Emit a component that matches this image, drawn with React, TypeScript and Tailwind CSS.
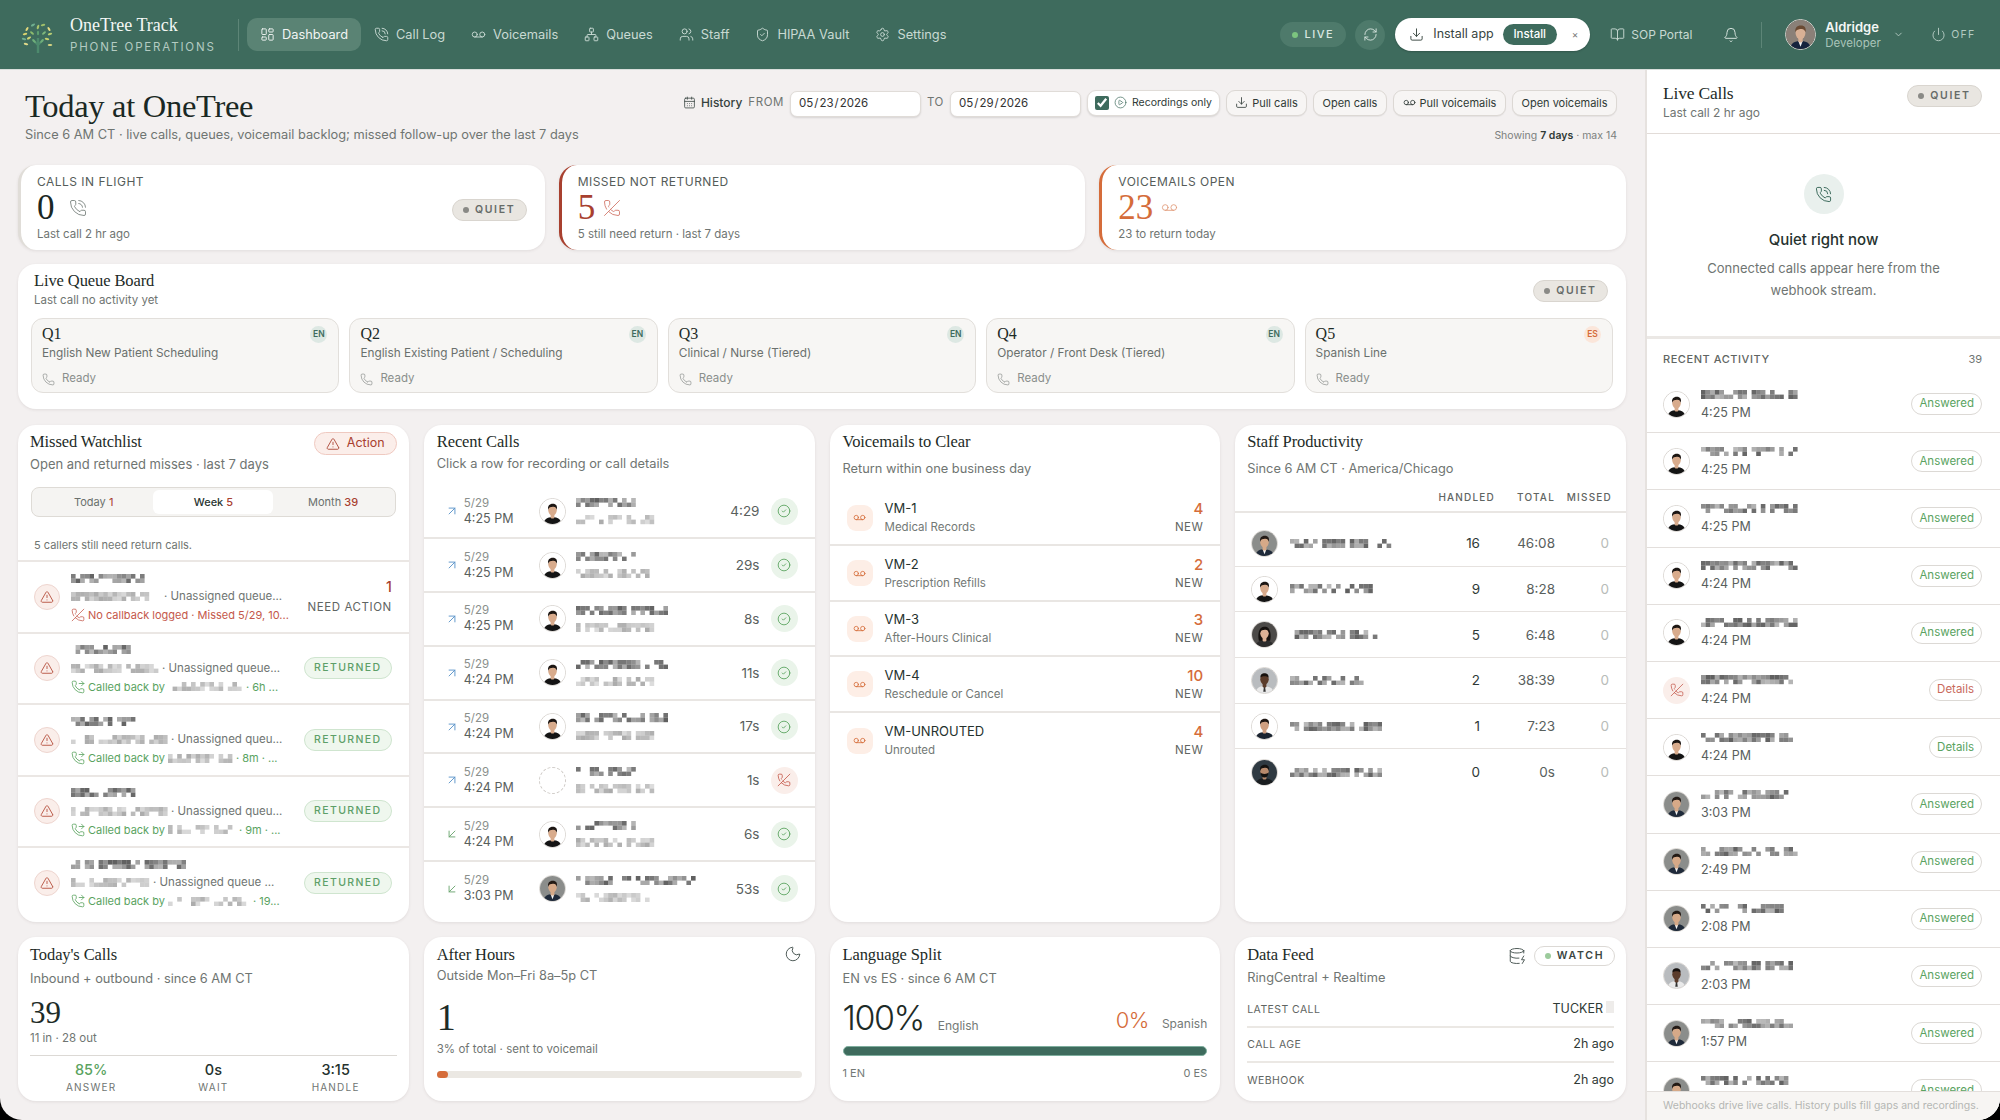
import {
  ArrowDownLeft,
  ArrowUpRight,
  Bell,
  BookOpen,
  CalendarDays,
  ChevronDown,
  CircleCheck,
  CirclePlay,
  DatabaseZap,
  Download,
  LayoutDashboard,
  Moon,
  Network,
  Phone,
  PhoneCall,
  PhoneForwarded,
  PhoneOff,
  Power,
  RefreshCw,
  Settings,
  ShieldCheck,
  TriangleAlert,
  Users,
  Voicemail,
} from "lucide-react";

type Face = "black" | "suit" | "woman" | "dark" | "smile" | "beard" | "boss";

const faces: Record<Face, { bg: string; skin: string; hair: string; shirt: string }> = {
  black: { bg: "#ffffff", skin: "#d8ab8c", hair: "#1c1613", shirt: "#141414" },
  suit: { bg: "#8b8d8b", skin: "#d6a988", hair: "#231a15", shirt: "#1f2a3a" },
  woman: { bg: "#4c4a48", skin: "#dcb196", hair: "#15110f", shirt: "#2b2b2b" },
  dark: { bg: "#b9bcbf", skin: "#5b3c2b", hair: "#17110e", shirt: "#e9e9e9" },
  smile: { bg: "#ffffff", skin: "#cf9f80", hair: "#1e1612", shirt: "#1b2430" },
  beard: { bg: "#2f3a42", skin: "#b88a6c", hair: "#141210", shirt: "#1a1d20" },
  boss: { bg: "#8a8078", skin: "#d8b095", hair: "#6a4a33", shirt: "#16233d" },
};

function Avatar({ face, size = 27 }: { face: Face; size?: number }) {
  const f = faces[face];
  return (
    <svg
      width={size}
      height={size}
      viewBox="0 0 40 40"
      className="shrink-0 rounded-full border border-[#d8d4d0]"
    >
      <rect width="40" height="40" fill={f.bg} />
      <path d="M6 40c0-8 6-11 14-11s14 3 14 11z" fill={f.shirt} />
      {face === "suit" || face === "boss" ? (
        <path d="M17 29h6l-3 8z" fill="#f2f2f2" />
      ) : null}
      {face === "dark" ? <path d="M19 30h2l1 8h-4z" fill="#333" /> : null}
      {face === "woman" ? (
        <path d="M11 30c-2-9-1-22 9-22s11 13 9 22z" fill={f.hair} />
      ) : null}
      <rect x="17" y="23" width="6" height="8" rx="2" fill={f.skin} />
      <ellipse cx="20" cy="18" rx="6.8" ry="8.6" fill={f.skin} />
      <path
        d={
          face === "dark"
            ? "M13.5 15c0-5 3-6.5 6.5-6.5s6.500 1.500 6.500 6.500c-3-2.500-10-2.500-13 0z"
            : "M13 17c-1-6 2-9.500 7.500-9.500S28 11 27 17c-1-3-3-5-6.500-4.500-3 .5-6 .5-7.500 4.500z"
        }
        fill={f.hair}
      />
      {face === "beard" ? (
        <path d="M13.500 20c1 7 4 8 6.500 8s5.500-1 6.500-8c-2 3-11 3-13 0z" fill={f.hair} />
      ) : null}
    </svg>
  );
}

// redacted text in the picture: a seeded mosaic, not letters
function Mosaic({
  seed,
  width,
  dark = false,
  rows = 2,
}: {
  seed: number;
  width: number;
  dark?: boolean;
  rows?: number;
}) {
  const cell = 4.6;
  const cells = [];
  let s = seed * 7919 + 13;
  const cols = Math.floor(width / cell);
  for (let y = 0; y < rows; y++) {
    for (let x = 0; x < cols; x++) {
      s = (s * 1103515245 + 12345) & 0x7fffffff;
      const v = ((s >> 8) % 100) / 100;
      if (v < 0.3) continue;
      const o = (dark ? 0.15 : 0.06) + v * (dark ? 0.6 : 0.34);
      cells.push(
        <rect key={`${x}-${y}`} x={x * cell} y={y * cell} width={cell} height={cell} fill="#2a2a2a" opacity={o} />,
      );
    }
  }
  return (
    <svg width={width} height={rows * cell} className="block shrink-0 blur-[0.7px]">
      {cells}
    </svg>
  );
}

function Logo() {
  const leaves: [number, number, number, string][] = [
    [17, 6, -70, "#a9c46c"],
    [12, 4, -30, "#6fae8f"],
    [22, 4, -15, "#9fbf6a"],
    [6, 8, -60, "#e1d77c"],
    [28, 8, 60, "#e6dc86"],
    [4, 13, -15, "#d9d26e"],
    [11, 12, 40, "#8dbb6c"],
    [23, 12, -40, "#7fb87c"],
    [29, 13, -20, "#b6cc74"],
    [3, 18, 15, "#6fae8f"],
    [8, 17, -30, "#cfd474"],
    [17, 12, 90, "#5fa070"],
    [26, 18, 10, "#c6d070"],
    [5, 23, 15, "#e0d98a"],
    [13, 20, 45, "#6fae7a"],
    [21, 20, -45, "#6fae7a"],
    [29, 24, 0, "#dcd884"],
  ];
  return (
    <svg width="36" height="32" viewBox="0 0 34 32" className="shrink-0">
      <path d="M17 32V17M17 24l-5-5M17 24l5-5" stroke="#4d8a6d" strokeWidth="2.4" fill="none" />
      {leaves.map(([x, y, r, c]) => (
        <ellipse
          key={`${x}-${y}`}
          cx={x}
          cy={y}
          rx="2.300"
          ry="1.100"
          fill={c}
          transform={`rotate(${r} ${x} ${y})`}
        />
      ))}
    </svg>
  );
}

const serif = "font-['Liberation_Serif',serif]";

function Title({ children }: { children: React.ReactNode }) {
  return (
    <div className={`${serif} h-[20px] text-[16.5px] leading-[20px] tracking-[-0.1px] text-[#1d2b27]`}>
      {children}
    </div>
  );
}

function Sub({ children, className = "" }: { children: React.ReactNode; className?: string }) {
  return <div className={`h-[18px] text-[12.8px] leading-[18px] text-[#6f7572] ${className}`}>{children}</div>;
}

function Quiet({ className = "" }: { className?: string }) {
  return (
    <div
      className={`flex h-[22px] w-[75px] shrink-0 items-center justify-center gap-[6px] rounded-full border border-[#d9d5cf] bg-[#e9e6e1] text-[10.5px] font-semibold tracking-[0.16em] text-[#666b68] ${className}`}
    >
      <span className="h-[6px] w-[6px] rounded-full bg-[#8a8a86]" />
      QUIET
    </div>
  );
}

const navItems = [
  { label: "Dashboard", icon: LayoutDashboard, active: true },
  { label: "Call Log", icon: PhoneCall },
  { label: "Voicemails", icon: Voicemail },
  { label: "Queues", icon: Network },
  { label: "Staff", icon: Users },
  { label: "HIPAA Vault", icon: ShieldCheck },
  { label: "Settings", icon: Settings },
];

function Header() {
  return (
    <header className="flex h-[70px] shrink-0 items-center border-b border-[#d9dedb] bg-[#3e6b5d] pl-[20px] text-white">
      <div className="w-[46px] pt-[4px]">
        <Logo />
      </div>
      <div className="ml-[4px] w-[168px]">
        <div className={`${serif} text-[18px] leading-[22px] text-[#f4f7f5]`}>OneTree Track</div>
        <div className="mt-[3px] text-[11.500px] leading-[16px] tracking-[0.16em] text-[#b4cbc2]">PHONE OPERATIONS</div>
      </div>
      <div className="h-[32px] w-px bg-[#5d8577]" />
      <nav className="ml-[8px] flex items-center">
        {navItems.map((item) => (
          <div
            key={item.label}
            className={`flex h-[33px] items-center gap-[7px] rounded-[10px] px-[13px] text-[12.8px] ${
              item.active ? "bg-[#5a8374] text-[#f1f5f3]" : "text-[#c9dad3]"
            }`}
          >
            <item.icon size={15} strokeWidth={1.500} />
            {item.label}
          </div>
        ))}
      </nav>
      <div className="ml-auto flex items-center pr-[24.500px]">
        <div className="flex h-[25px] w-[66px] items-center justify-center gap-[6px] rounded-full bg-[#4e7a6b] text-[11px] font-medium tracking-[0.14em] text-[#dbe8e2]">
          <span className="h-[6px] w-[6px] rounded-full bg-[#7cc47f]" />
          LIVE
        </div>
        <div className="ml-[9px] flex h-[30px] w-[30px] items-center justify-center rounded-full bg-[#4e7a6b] text-[#d6e4de]">
          <RefreshCw size={15} strokeWidth={1.500} />
        </div>
        <div className="ml-[10px] flex h-[33px] w-[195px] items-center rounded-full bg-white pl-[14px] text-[#38453f] shadow-[0_1px_2px_rgba(0,0,0,.2)]">
          <Download size={15} strokeWidth={1.500} />
          <span className="ml-[9px] whitespace-nowrap text-[12.500px]">Install app</span>
          <span className="ml-[9px] flex h-[21px] w-[54px] items-center justify-center rounded-full bg-[#3e6b5d] text-[11.500px] font-medium text-white">
            Install
          </span>
          <span className="ml-[15px] text-[10px] text-[#777]">×</span>
        </div>
        <div className="ml-[20px] flex w-[82px] items-center gap-[6px] whitespace-nowrap text-[12px] text-[#c9dad3]">
          <BookOpen size={15} strokeWidth={1.500} className="shrink-0" />
          SOP Portal
        </div>
        <Bell size={16} strokeWidth={1.500} className="ml-[31px] text-[#d3e1db]" />
        <div className="ml-[22px] h-[26px] w-px bg-[#5d8577]" />
        <div className="ml-[23px]">
          <Avatar face="boss" size={31} />
        </div>
        <div className="ml-[9px] w-[62px]">
          <div className="text-[13px] font-semibold leading-[18px] text-[#f4f7f5]">Aldridge</div>
          <div className="text-[11.500px] leading-[15px] text-[#a9c4b9]">Developer</div>
        </div>
        <ChevronDown size={11} className="ml-[6px] text-[#b4cbc2]" />
        <Power size={15} strokeWidth={1.500} className="ml-[27px] text-[#b4cbc2]" />
        <span className="ml-[5px] text-[10.500px] tracking-[0.12em] text-[#b4cbc2]">OFF</span>
      </div>
    </header>
  );
}

function Chip({ children, className }: { children: React.ReactNode; className: string }) {
  return (
    <div
      className={`flex h-[26px] items-center justify-center gap-[4px] whitespace-nowrap rounded-[9px] border border-[#dcd8d4] bg-[#f7f5f4] text-[11px] text-[#2f3a36] shadow-[0_1px_1px_rgba(0,0,0,.06)] ${className}`}
    >
      {children}
    </div>
  );
}

function DateBox({ value }: { value: string }) {
  return (
    <input
      type="date"
      readOnly
      value={value}
      className="h-[26px] w-[131px] rounded-[7px] border border-[#e0dcd8] bg-white px-[7px] text-[11.500px] text-[#333] shadow-[0_1px_2px_rgba(0,0,0,.12)]"
    />
  );
}

function PageHead() {
  return (
    <div className="flex h-[95px] shrink-0 justify-between pl-[25px] pr-[28px]">
      <div className="pt-[16px]">
        <h1 className={`${serif} text-[32.500px] leading-[40px] tracking-[-0.3px] text-[#1a2824]`}>Today at OneTree</h1>
        <div className="text-[12.8px] leading-[18px] text-[#6f7572]">
          Since 6 AM CT · live calls, queues, voicemail backlog; missed follow-up over the last 7 days
        </div>
      </div>
      <div className="flex flex-col items-end pt-[19px]">
        <div className="flex items-center">
          <CalendarDays size={13} strokeWidth={1.500} className="text-[#3e4a46]" />
          <span className="ml-[5px] text-[12px] font-medium text-[#36423e]">History</span>
          <span className="ml-[6px] text-[11.500px] tracking-[0.05em] text-[#6f7572]">FROM</span>
          <span className="ml-[6px]">
            <DateBox value="2026-05-23" />
          </span>
          <span className="ml-[6px] text-[11.500px] tracking-[0.05em] text-[#6f7572]">TO</span>
          <span className="ml-[6px]">
            <DateBox value="2026-05-29" />
          </span>
          <div className="ml-[6px] flex h-[26px] w-[133px] items-center gap-[5px] whitespace-nowrap rounded-[9px] border border-[#e0dcd8] bg-white px-[7px] text-[10.500px] text-[#2f3a36] shadow-[0_1px_2px_rgba(0,0,0,.12)]">
            <input type="checkbox" readOnly checked className="h-[14px] w-[14px] accent-[#3e6b5d]" />
            <CirclePlay size={13} strokeWidth={1.300} className="shrink-0 text-[#3e6b5d]" />
            Recordings only
          </div>
          <div className="ml-[6px] flex gap-[6px]">
            <Chip className="w-[81px]">
              <Download size={13} strokeWidth={1.500} />
              Pull calls
            </Chip>
            <Chip className="w-[74px]">Open calls</Chip>
            <Chip className="w-[113px]">
              <Voicemail size={13} strokeWidth={1.500} />
              Pull voicemails
            </Chip>
            <Chip className="w-[105px]">Open voicemails</Chip>
          </div>
        </div>
        <div className="mt-[12px] text-[10.500px] leading-[14px] text-[#7b807d]">
          Showing <b className="font-semibold text-[#2f3a36]">7 days</b> · max 14
        </div>
      </div>
    </div>
  );
}

const cardClass = "rounded-[18px] bg-white shadow-[0_1px_3px_rgba(70,50,50,.10)]";

function Kpi({
  label,
  value,
  icon,
  sub,
  border,
  color,
  quiet,
}: {
  label: string;
  value: string;
  icon: React.ReactNode;
  sub: string;
  border: string;
  color: string;
  quiet?: boolean;
}) {
  return (
    <div className={`${cardClass} ${border} flex h-[85px] items-center justify-between border-l-[3px] pl-[16px] pr-[18px]`}>
      <div>
        <div className="h-[16px] text-[12px] leading-[16px] tracking-[0.04em] text-[#555c59]">{label}</div>
        <div className="flex h-[36px] items-center gap-[8px]">
          <span className={`${serif} ${color} text-[35px] leading-[36px]`}>{value}</span>
          {icon}
        </div>
        <div className="h-[16px] text-[11.500px] leading-[16px] text-[#6f7572]">{sub}</div>
      </div>
      {quiet ? <Quiet className="mt-[4px]" /> : null}
    </div>
  );
}

const queues = [
  { q: "Q1", name: "English New Patient Scheduling", lang: "EN" },
  { q: "Q2", name: "English Existing Patient / Scheduling", lang: "EN" },
  { q: "Q3", name: "Clinical / Nurse (Tiered)", lang: "EN" },
  { q: "Q4", name: "Operator / Front Desk (Tiered)", lang: "EN" },
  { q: "Q5", name: "Spanish Line", lang: "ES" },
];

function QueueBoard() {
  return (
    <section className={`${cardClass} mt-[14px] h-[145px]`}>
      <div className="flex justify-between pl-[16px] pr-[18px] pt-[7px]">
        <div>
          <Title>Live Queue Board</Title>
          <div className="mt-px h-[16px] text-[11.500px] leading-[16px] text-[#6f7572]">Last call no activity yet</div>
        </div>
        <Quiet className="mt-[9px]" />
      </div>
      <div className="mt-[10px] grid grid-cols-5 gap-[10px] px-[13px]">
        {queues.map((q) => (
          <div key={q.q} className="h-[75px] rounded-[12px] border border-[#e2dfdb] bg-[#f7f6f4] pl-[10px] pr-[11px] pt-[5px]">
            <div className="flex h-[20px] items-start justify-between">
              <span className={`${serif} text-[16px] leading-[20px] text-[#1d2b27]`}>{q.q}</span>
              <span
                className={`mt-[2px] flex h-[17px] w-[17px] items-center justify-center rounded-full text-[8.500px] font-semibold ${
                  q.lang === "EN" ? "bg-[#dde8e3] text-[#3e6b5d]" : "bg-[#fbe6da] text-[#d56c3a]"
                }`}
              >
                {q.lang}
              </span>
            </div>
            <div className="mt-px h-[16px] text-[11.800px] leading-[16px] text-[#6a706d]">{q.name}</div>
            <div className="mt-[10px] flex h-[16px] items-center gap-[7px] text-[11.500px] text-[#8a8f8c]">
              <Phone size={13} strokeWidth={1.300} />
              Ready
            </div>
          </div>
        ))}
      </div>
    </section>
  );
}

const missed = [
  { name: 77, phone: 90, text: "Unassigned queue...", back: 0, tail: "", action: true },
  { name: 62, phone: 88, text: "Unassigned queue...", back: 75, tail: "· 6h ...", action: false },
  { name: 66, phone: 97, text: "Unassigned queu...", back: 65, tail: "· 8m · ...", action: false },
  { name: 66, phone: 97, text: "Unassigned queu...", back: 68, tail: "· 9m · ...", action: false },
  { name: 118, phone: 79, text: "Unassigned queue ...", back: 82, tail: "· 19...", action: false },
];

function Watchlist() {
  return (
    <section className={`${cardClass} overflow-hidden`}>
      <div className="flex items-start justify-between pl-[12px] pr-[12px] pt-[7px]">
        <div>
          <Title>Missed Watchlist</Title>
          <Sub className="mt-[3px] text-[13px]">Open and returned misses · last 7 days</Sub>
        </div>
        <div className="flex h-[23px] w-[83px] items-center justify-center gap-[7px] rounded-full border border-[#efc9c0] bg-[#fbeeea] text-[12.500px] text-[#a8402f]">
          <TriangleAlert size={14} strokeWidth={1.500} />
          Action
        </div>
      </div>
      <div className="mx-[13px] mt-[14px] flex h-[30px] items-center rounded-[8px] border border-[#dedbd6] bg-[#f5f4f2] px-[2px] text-[11px]">
        <div className="flex-1 text-center text-[#6a706d]">
          Today <span className="text-[#a8402f]">1</span>
        </div>
        <div className="flex h-[24px] w-[120px] items-center justify-center rounded-[6px] bg-white font-medium text-[#2b3733]">
          Week&nbsp;<span className="text-[#a8402f]">5</span>
        </div>
        <div className="flex-1 text-center text-[#6a706d]">
          Month <span className="font-medium text-[#a8402f]">39</span>
        </div>
      </div>
      <div className="flex h-[43px] items-end pb-[7px] pl-[16px] text-[11px] leading-[16px] text-[#6f7572]">
        5 callers still need return calls.
      </div>
      {missed.map((m, i) => (
        <div key={i} className="flex h-[71.500px] items-center border-t-[2px] border-[#ebe7e4] pl-[16px] pr-[17px]">
          <div className="flex h-[26px] w-[26px] shrink-0 items-center justify-center rounded-full border border-[#eed5cf] bg-[#faeeea] text-[#b44a38]">
            <TriangleAlert size={14} strokeWidth={1.500} />
          </div>
          <div className="ml-[11px] min-w-0 flex-1">
            <div className="flex h-[18px] items-center">
              <Mosaic seed={i + 3} width={m.name} dark />
            </div>
            <div className="flex h-[19px] items-center gap-[3px] whitespace-nowrap text-[11.500px] text-[#6f7572]">
              <Mosaic seed={i + 31} width={m.phone} />· {m.text}
            </div>
            {m.action ? (
              <div className="flex h-[18px] items-center gap-[3px] whitespace-nowrap text-[11px] text-[#c4574a]">
                <PhoneOff size={14} strokeWidth={1.300} />
                No callback logged · Missed 5/29, 10...
              </div>
            ) : (
              <div className="flex h-[18px] items-center gap-[3px] whitespace-nowrap text-[11px] text-[#5aa35f]">
                <PhoneForwarded size={14} strokeWidth={1.400} />
                Called back by <Mosaic seed={i + 51} width={m.back} /> {m.tail}
              </div>
            )}
          </div>
          {m.action ? (
            <div className="text-right">
              <div className="text-[14px] font-medium leading-[20px] text-[#a8402f]">1</div>
              <div className="mt-[2px] text-[11.500px] tracking-[0.05em] text-[#5f6562]">NEED ACTION</div>
            </div>
          ) : (
            <div className="flex h-[22px] w-[88px] shrink-0 items-center justify-center rounded-full border border-[#cfe5cf] bg-[#eff7ee] text-[10.500px] font-medium tracking-[0.13em] text-[#5d9f68]">
              RETURNED
            </div>
          )}
        </div>
      ))}
    </section>
  );
}

const calls: { up: boolean; time: string; dur: string; face: Face | null; m: number; p: number }[] = [
  { up: true, time: "4:25 PM", dur: "4:29", face: "black", m: 64, p: 80 },
  { up: true, time: "4:25 PM", dur: "29s", face: "black", m: 64, p: 80 },
  { up: true, time: "4:25 PM", dur: "8s", face: "black", m: 96, p: 82 },
  { up: true, time: "4:24 PM", dur: "11s", face: "black", m: 96, p: 82 },
  { up: true, time: "4:24 PM", dur: "17s", face: "black", m: 96, p: 82 },
  { up: true, time: "4:24 PM", dur: "1s", face: null, m: 64, p: 80 },
  { up: false, time: "4:24 PM", dur: "6s", face: "black", m: 64, p: 80 },
  { up: false, time: "3:03 PM", dur: "53s", face: "suit", m: 120, p: 74 },
];

function RecentCalls() {
  return (
    <section className={`${cardClass} overflow-hidden`}>
      <div className="pl-[13px] pt-[7px]">
        <Title>Recent Calls</Title>
        <Sub className="mt-[3px]">Click a row for recording or call details</Sub>
      </div>
      <div className="mt-[12.500px]">
        {calls.map((c, i) => (
          <div
            key={i}
            className={`flex h-[53.800px] items-center pl-[21px] pr-[17px] ${
              i < calls.length - 1 ? "border-b-[2px] border-[#e9e6e3]" : ""
            }`}
          >
            {c.up ? (
              <ArrowUpRight size={14} strokeWidth={1.600} className="shrink-0 text-[#5a93c9]" />
            ) : (
              <ArrowDownLeft size={14} strokeWidth={1.600} className="shrink-0 text-[#6aa56f]" />
            )}
            <div className="ml-[5px] w-[75px]">
              <div className="text-[11.500px] leading-[15px] text-[#8a8f8c]">5/29</div>
              <div className="text-[12.500px] leading-[16px] text-[#59605d]">{c.time}</div>
            </div>
            {c.face ? (
              <Avatar face={c.face} />
            ) : (
              <div className="h-[27px] w-[27px] shrink-0 rounded-full border border-dashed border-[#cfcbc7]" />
            )}
            <div className="ml-[10px] flex-1">
              <Mosaic seed={i + 11} width={c.m} dark />
              <div className="mt-[8px]">
                <Mosaic seed={i + 71} width={c.p} />
              </div>
            </div>
            <span className="text-[13.500px] text-[#59605d]">{c.dur}</span>
            <span
              className={`ml-[11px] flex h-[27px] w-[27px] shrink-0 items-center justify-center rounded-full ${
                c.face ? "bg-[#eaf4ea] text-[#5aa35f]" : "bg-[#faeeea] text-[#c4574a]"
              }`}
            >
              {c.face ? <CircleCheck size={14} strokeWidth={1.500} /> : <PhoneOff size={14} strokeWidth={1.400} />}
            </span>
          </div>
        ))}
      </div>
    </section>
  );
}

const voicemails = [
  { id: "VM-1", name: "Medical Records", count: 4 },
  { id: "VM-2", name: "Prescription Refills", count: 2 },
  { id: "VM-3", name: "After-Hours Clinical", count: 3 },
  { id: "VM-4", name: "Reschedule or Cancel", count: 10 },
  { id: "VM-UNROUTED", name: "Unrouted", count: 4 },
];

function VoicemailsCard() {
  return (
    <section className={`${cardClass} overflow-hidden`}>
      <div className="pl-[13px] pt-[7px]">
        <Title>Voicemails to Clear</Title>
        <Sub className="mt-[8px]">Return within one business day</Sub>
      </div>
      <div className="mt-[12.500px]">
        {voicemails.map((v, i) => (
          <div
            key={v.id}
            className={`flex h-[55.500px] items-center pl-[17px] pr-[17px] pt-px ${
              i < voicemails.length - 1 ? "border-b-[2px] border-[#e9e6e3]" : ""
            }`}
          >
            <div className="flex h-[26px] w-[26px] items-center justify-center rounded-[9px] bg-[#fdeee6] text-[#d56c3a]">
              <Voicemail size={13} strokeWidth={1.500} />
            </div>
            <div className="ml-[12px] flex-1">
              <div className="text-[13px] leading-[19px] text-[#25322e]">{v.id}</div>
              <div className="text-[11.500px] leading-[18px] text-[#737976]">{v.name}</div>
            </div>
            <div className="text-right">
              <div className="text-[15px] font-medium leading-[19px] text-[#d56c3a]">{v.count}</div>
              <div className="text-[11.500px] leading-[18px] tracking-[0.04em] text-[#5f6562]">NEW</div>
            </div>
          </div>
        ))}
      </div>
    </section>
  );
}

const staff: { face: Face; w: number; handled: number; total: string }[] = [
  { face: "suit", w: 105, handled: 16, total: "46:08" },
  { face: "black", w: 88, handled: 9, total: "8:28" },
  { face: "woman", w: 88, handled: 5, total: "6:48" },
  { face: "dark", w: 78, handled: 2, total: "38:39" },
  { face: "smile", w: 93, handled: 1, total: "7:23" },
  { face: "beard", w: 93, handled: 0, total: "0s" },
];

function StaffCard() {
  return (
    <section className={`${cardClass} overflow-hidden`}>
      <div className="pl-[12px] pt-[7px]">
        <Title>Staff Productivity</Title>
        <Sub className="mt-[8px]">Since 6 AM CT · America/Chicago</Sub>
      </div>
      <div className="flex h-[35px] items-center justify-end border-b-[2px] border-[#e9e6e3] pr-[14px] pt-[5px] text-[10px] font-medium tracking-[0.12em] text-[#5f6562]">
        <span>HANDLED</span>
        <span className="w-[60px] text-right">TOTAL</span>
        <span className="w-[57px] text-right">MISSED</span>
      </div>
      <div className="mt-[8px]">
        {staff.map((s, i) => (
          <div
            key={s.face}
            className={`flex h-[45.700px] items-center pl-[16px] pr-[17px] ${
              i < staff.length - 1 ? "border-b border-[#e6e2df]" : ""
            }`}
          >
            <Avatar face={s.face} />
            <div className="ml-[12px] flex-1">
              <Mosaic seed={i + 91} width={s.w} dark />
            </div>
            <span className="text-[13.500px] text-[#2f3a36]">{s.handled}</span>
            <span className="w-[75px] text-right text-[13.500px] text-[#59605d]">{s.total}</span>
            <span className="w-[54px] text-right text-[13.500px] text-[#b8bcb9]">0</span>
          </div>
        ))}
      </div>
    </section>
  );
}

function BottomRow() {
  return (
    <div className="mt-[15px] grid h-[164px] grid-cols-4 gap-[15px]">
      <section className={`${cardClass} px-[12px] pt-[8px]`}>
        <Title>Today's Calls</Title>
        <Sub className="mt-[5px]">Inbound + outbound · since 6 AM CT</Sub>
        <div className={`${serif} mt-[8px] h-[34px] text-[31px] leading-[34px] text-[#1d2b27]`}>39</div>
        <div className="h-[16px] text-[11.500px] leading-[16px] text-[#6f7572]">11 in · 28 out</div>
        <div className="mt-[9px] grid grid-cols-3 border-t border-[#dcd9d5] pt-[4px] text-center">
          {[
            { v: "85%", l: "ANSWER", c: "text-[#5aa35f]" },
            { v: "0s", l: "WAIT", c: "text-[#25322e]" },
            { v: "3:15", l: "HANDLE", c: "text-[#25322e]" },
          ].map((s) => (
            <div key={s.l}>
              <div className={`text-[14.500px] font-medium leading-[20px] ${s.c}`}>{s.v}</div>
              <div className="text-[10px] leading-[14px] tracking-[0.12em] text-[#6f7572]">{s.l}</div>
            </div>
          ))}
        </div>
      </section>
      <section className={`${cardClass} px-[13px] pt-[8px]`}>
        <div className="flex justify-between">
          <Title>After Hours</Title>
          <Moon size={18} strokeWidth={1.300} className="text-[#4c5855]" />
        </div>
        <Sub className="mt-[2px]">Outside Mon–Fri 8a–5p CT</Sub>
        <div className={`${serif} mt-[15px] h-[34px] text-[38px] leading-[34px] text-[#1d2b27]`}>1</div>
        <div className="mt-[7px] h-[16px] text-[11.500px] leading-[16px] text-[#6f7572]">3% of total · sent to voicemail</div>
        <div className="mt-[14px] h-[7px] rounded-full bg-[#ebe8e3]">
          <div className="h-full w-[3%] rounded-full bg-[#d56c3a]" />
        </div>
      </section>
      <section className={`${cardClass} px-[13px] pt-[8px]`}>
        <Title>Language Split</Title>
        <Sub className="mt-[5px]">EN vs ES · since 6 AM CT</Sub>
        <div className="mt-[9px] flex h-[40px] items-end justify-between pb-[2.500px]">
          <div className="flex items-baseline gap-[14px]">
            <span className="text-[34px] font-light leading-[34px] tracking-[-1.500px] text-[#1d2b27]">100%</span>
            <span className="text-[12px] text-[#737976]">English</span>
          </div>
          <div className="mb-[-2.500px] flex items-baseline gap-[13px]">
            <span className="text-[22px] font-light leading-[34px] tracking-[-0.5px] text-[#d56c3a]">0%</span>
            <span className="text-[12px] text-[#737976]">Spanish</span>
          </div>
        </div>
        <div className="mt-[9px] h-[10px] rounded-full border border-[#7fae9e] bg-[#3e6b5d]" />
        <div className="mt-[9px] flex justify-between text-[11px] leading-[16px] text-[#737976]">
          <span>1 EN</span>
          <span>0 ES</span>
        </div>
      </section>
      <section className={`${cardClass} px-[12px] pt-[8px]`}>
        <div className="flex items-start justify-between">
          <Title>Data Feed</Title>
          <div className="-mr-px flex items-center gap-[8px] pt-px">
            <DatabaseZap size={18} strokeWidth={1.300} className="text-[#4c5855]" />
            <div className="flex h-[20px] w-[81px] items-center justify-center gap-[6px] rounded-full border border-[#dcd9d5] text-[10.500px] font-semibold tracking-[0.16em] text-[#3a4541]">
              <span className="h-[6px] w-[6px] rounded-full bg-[#9ccb9c]" />
              WATCH
            </div>
          </div>
        </div>
        <Sub className="mt-[3px]">RingCentral + Realtime</Sub>
        <div className="mt-[6px]">
          {[
            { k: "LATEST CALL", v: "TUCKER" },
            { k: "CALL AGE", v: "2h ago" },
            { k: "WEBHOOK", v: "2h ago" },
          ].map((r, i) => (
            <div
              key={r.k}
              className={`flex h-[35px] items-center justify-between ${i < 2 ? "border-b-[2px] border-[#ebe8e4]" : ""}`}
            >
              <span className="text-[10.500px] tracking-[0.04em] text-[#5f6562]">{r.k}</span>
              <span className="flex items-center gap-[3px] text-[12.500px] text-[#2f3a36]">
                {r.v}
                {i === 0 ? <span className="mb-[6px] h-[12px] w-[8px] bg-[#eeecea]" /> : null}
              </span>
            </div>
          ))}
        </div>
      </section>
    </div>
  );
}

const activity: { face: Face | null; time: string; status: string; seed: number; w: number }[] = [
  { face: "black", time: "4:25 PM", status: "Answered", seed: 1, w: 97 },
  { face: "black", time: "4:25 PM", status: "Answered", seed: 2, w: 97 },
  { face: "black", time: "4:25 PM", status: "Answered", seed: 3, w: 97 },
  { face: "black", time: "4:24 PM", status: "Answered", seed: 4, w: 97 },
  { face: "black", time: "4:24 PM", status: "Answered", seed: 5, w: 97 },
  { face: null, time: "4:24 PM", status: "Details", seed: 6, w: 97 },
  { face: "black", time: "4:24 PM", status: "Details", seed: 7, w: 97 },
  { face: "suit", time: "3:03 PM", status: "Answered", seed: 8, w: 90 },
  { face: "suit", time: "2:49 PM", status: "Answered", seed: 9, w: 97 },
  { face: "suit", time: "2:08 PM", status: "Answered", seed: 10, w: 90 },
  { face: "dark", time: "2:03 PM", status: "Answered", seed: 11, w: 93 },
  { face: "suit", time: "1:57 PM", status: "Answered", seed: 12, w: 93 },
  { face: "suit", time: "", status: "Answered", seed: 13, w: 90 },
];

function Sidebar() {
  return (
    <aside className="flex w-[355px] shrink-0 flex-col overflow-hidden border-l-[2px] border-[#e6e2df] bg-white">
      <div className="flex h-[64px] shrink-0 justify-between border-b border-[#e2dcd8] pl-[16px] pr-[18px] pt-[13px]">
        <div>
          <div className={`${serif} text-[17.500px] leading-[20px] tracking-[-0.2px] text-[#1d2b27]`}>Live Calls</div>
          <div className="mt-px text-[12px] leading-[17px] text-[#6f7572]">Last call 2 hr ago</div>
        </div>
        <Quiet className="mt-[2px]" />
      </div>
      <div className="flex h-[205px] shrink-0 flex-col items-center border-b-[3px] border-[#ebe8e5] pt-[40px]">
        <div className="flex h-[40px] w-[40px] items-center justify-center rounded-full bg-[#e9f0ed] text-[#3e6b5d]">
          <PhoneCall size={17} strokeWidth={1.400} />
        </div>
        <div className="mt-[15px] text-[15px] font-medium leading-[22px] text-[#25322e]">Quiet right now</div>
        <div className="mt-[6px] w-[260px] text-center text-[13px] leading-[22px] text-[#6f7572]">
          Connected calls appear here from the webhook stream.
        </div>
      </div>
      <div className="flex h-[37px] shrink-0 items-center justify-between pl-[16px] pr-[18px] pt-[3px] text-[11px]">
        <span className="font-medium tracking-[0.05em] text-[#5f6562]">RECENT ACTIVITY</span>
        <span className="text-[#6f7572]">39</span>
      </div>
      <div className="min-h-0 flex-1 overflow-hidden">
        {activity.map((a) => (
          <div key={a.seed} className="flex h-[57.200px] items-center border-b border-[#e3dfdc] pl-[16px] pr-[18px]">
            {a.face ? (
              <Avatar face={a.face} />
            ) : (
              <div className="flex h-[27px] w-[27px] shrink-0 items-center justify-center rounded-full bg-[#faeeea] text-[#c4574a]">
                <PhoneOff size={14} strokeWidth={1.300} />
              </div>
            )}
            <div className="ml-[11px] flex-1 pt-[2px]">
              <Mosaic seed={a.seed + 200} width={a.w} dark />
              {a.time ? (
                <div className="mt-[6px] text-[12.500px] leading-[16px] text-[#59605d]">{a.time}</div>
              ) : (
                <div className="mt-[6px] h-[16px]" />
              )}
            </div>
            <div
              className={`flex h-[22px] items-center rounded-full border border-[#dcd9d5] px-[7px] text-[11.500px] ${
                a.status === "Answered"
                  ? "text-[#5aa35f]"
                  : a.face
                    ? "text-[#5aa35f]"
                    : "text-[#c96a5c]"
              }`}
            >
              {a.status}
            </div>
          </div>
        ))}
      </div>
      <div className="flex h-[29px] shrink-0 items-center border-t border-[#e3dfdc] bg-[#f7f5f3] pl-[16px] text-[10.500px] text-[#b5b7b3]">
        Webhooks drive live calls. History pulls fill gaps and recordings.
      </div>
    </aside>
  );
}

export default function App() {
  return (
    <div className="h-[1120px] w-[2000px] overflow-hidden bg-black font-['Inter',sans-serif]">
      <div className="flex h-full flex-col overflow-hidden rounded-b-[22px] bg-[#f3f0f0]">
        <Header />
        <div className="flex min-h-0 flex-1">
          <main className="min-w-0 flex-1">
            <PageHead />
            <div className="pl-[18px] pr-[19px]">
              <div className="grid grid-cols-3 gap-[14px]">
                <Kpi
                  label="CALLS IN FLIGHT"
                  value="0"
                  icon={<PhoneCall size={18} strokeWidth={1.200} className="ml-[6px] text-[#7b837f]" />}
                  sub="Last call 2 hr ago"
                  border="border-[#e0ddd8]"
                  color="text-[#1a2824]"
                  quiet
                />
                <Kpi
                  label="MISSED NOT RETURNED"
                  value="5"
                  icon={<PhoneOff size={18} strokeWidth={1.200} className="text-[#d2796c]" />}
                  sub="5 still need return · last 7 days"
                  border="border-[#a8402f]"
                  color="text-[#a8402f]"
                />
                <Kpi
                  label="VOICEMAILS OPEN"
                  value="23"
                  icon={<Voicemail size={17} strokeWidth={1.200} className="text-[#e09a78]" />}
                  sub="23 to return today"
                  border="border-[#d56c3a]"
                  color="text-[#d56c3a]"
                />
              </div>
              <QueueBoard />
              <div className="mt-[16px] grid h-[497px] grid-cols-4 gap-[15px]">
                <Watchlist />
                <RecentCalls />
                <VoicemailsCard />
                <StaffCard />
              </div>
              <BottomRow />
            </div>
          </main>
          <Sidebar />
        </div>
      </div>
    </div>
  );
}
